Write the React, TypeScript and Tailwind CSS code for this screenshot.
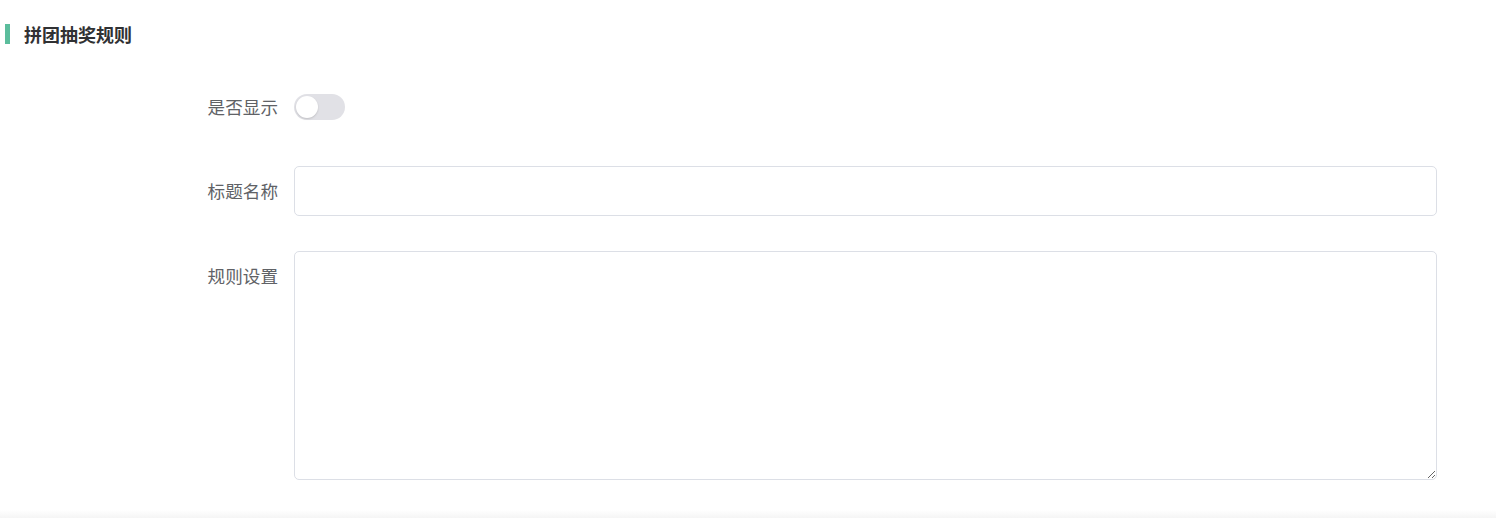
import React, { useState } from 'react';

const cjk = "font-['PingFang_SC','Noto_Sans_CJK_SC',sans-serif]";

const FormRow: React.FC<{ label: string; children: React.ReactNode; className?: string }> = ({ label, children, className }) => (
  <div className={`flex items-start ${className ?? ''}`}>
    <label className="w-[294px] shrink-0 pr-[16px] text-right text-[17.6px] leading-[50px] text-[#606266]">{label}</label>
    <div className="w-[1143px]">{children}</div>
  </div>
);

export default function App() {
  const [show, setShow] = useState(false);

  return (
    <div className={`relative h-[518px] w-full overflow-hidden bg-white ${cjk}`}>
      {/* section title */}
      <div className="flex items-center pt-[24px]">
        <span className="ml-[5px] h-[20px] w-[5px] bg-[#5bbd9c]" />
        <h2 className="ml-[14px] text-[18px] font-bold leading-[20px] text-[#303133]">拼团抽奖规则</h2>
      </div>

      <div className="mt-[38px]">
        <FormRow label="是否显示">
          <div className="flex h-[50px] items-center">
            <button
              onClick={() => setShow(!show)}
              className={`relative h-[26px] w-[51px] rounded-full transition-colors ${show ? 'bg-[#5bbd9c]' : 'bg-[#e1e1e6]'}`}
            >
              <span
                className={`absolute top-[2px] h-[22px] w-[22px] rounded-full bg-white shadow-[0_1px_2px_rgba(0,0,0,0.15)] transition-all ${show ? 'left-[27px]' : 'left-[2px]'}`}
              />
            </button>
          </div>
        </FormRow>

        <FormRow label="标题名称" className="mt-[34px]">
          <input className="block h-[50px] w-full rounded-[5px] border border-[#dcdfe6] px-[14px] text-[16px] text-[#606266] outline-none" />
        </FormRow>

        <FormRow label="规则设置" className="mt-[35px]">
          <textarea className="block h-[229px] w-full rounded-[5px] border border-[#dcdfe6] px-[14px] py-[10px] text-[16px] text-[#606266] outline-none" />
        </FormRow>
      </div>

      <div className="absolute bottom-0 left-0 h-[8px] w-full bg-gradient-to-b from-white to-[#f5f5f5]" />
    </div>
  );
}
